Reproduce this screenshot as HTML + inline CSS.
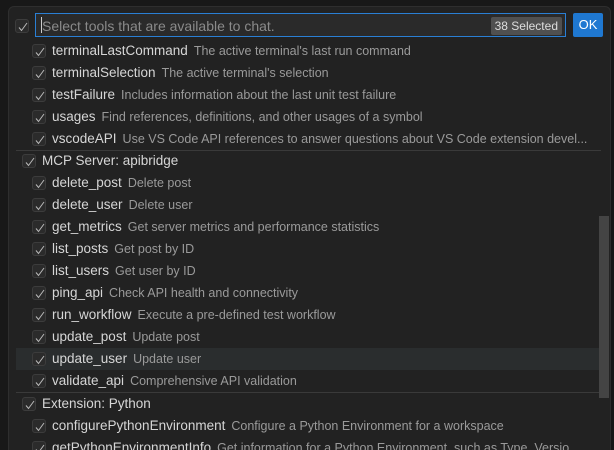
<!DOCTYPE html>
<html><head><style>
html,body{margin:0;width:614px;height:450px;overflow:hidden;}
body{background:#181818;position:relative;font-family:"Liberation Sans",sans-serif;}
.panel{position:absolute;left:8px;top:6px;width:601px;height:460px;background:#222222;border:1px solid #2e2e2e;border-radius:6px;}
.in{position:absolute;left:35px;top:13px;width:531px;height:24px;border:1px solid #2a7fd4;background:#2a2a2a;box-sizing:border-box;}
.ph{position:absolute;left:6px;top:4px;font-size:14px;color:#8a8a8a;}
.cur{position:absolute;left:5px;top:3px;width:1px;height:16px;background:#ccc;}
.badge{position:absolute;right:3px;top:3px;background:#505050;color:#ddd;font-size:12px;padding:2px 4px;border-radius:2px;}
.ok{position:absolute;left:573px;top:13px;width:30px;height:24px;background:#1f78d1;color:#fff;font-size:13px;text-align:center;line-height:24px;border-radius:2px;}
.cb{position:absolute;width:14px;height:14px;border:1px solid #3c3c3c;background:#2b2b2b;border-radius:3px;box-sizing:border-box;}
.cb svg{position:absolute;left:1px;top:1px}
.row{position:absolute;left:16px;width:583px;height:22px;font-size:13.5px;line-height:22px;white-space:nowrap;}
.row .n{color:#d6d6d6;}
.row .d{color:#9a9a9a;font-size:12.5px;margin-left:6px;}
.sep{position:absolute;left:16px;width:585px;height:1px;background:#3a3a3a;}
.hl{background:#2a2d2e;}
</style></head><body>
<div class="panel"></div>
<div class="cb" style="left:15px;top:19px;"><svg width="12" height="12"><path d="M2 6.5l2.5 3L10 2" stroke="#bbb" fill="none" stroke-width="1"/></svg></div>
<div class="in"><div class="cur"></div><div class="ph">Select tools that are available to chat.</div><div class="badge">38 Selected</div></div>
<div class="ok">OK</div>
<div class="sep" style="top:150px"></div>
<div class="sep" style="top:392px"></div>
<div style="position:absolute;left:599px;top:216px;width:10px;height:182px;background:#444"></div>
<div id="rows"></div>
<script>
var R=[["terminalLastCommand","The active terminal's last run command",1],["terminalSelection","The active terminal's selection",1],["testFailure","Includes information about the last unit test failure",1],["usages","Find references, definitions, and other usages of a symbol",1],["vscodeAPI","Use VS Code API references to answer questions about VS Code extension devel...",1],["MCP Server: apibridge","",0],["delete_post","Delete post",1],["delete_user","Delete user",1],["get_metrics","Get server metrics and performance statistics",1],["list_posts","Get post by ID",1],["list_users","Get user by ID",1],["ping_api","Check API health and connectivity",1],["run_workflow","Execute a pre-defined test workflow",1],["update_post","Update post",1],["update_user","Update user",1],["validate_api","Comprehensive API validation",1],["Extension: Python","",0],["configurePythonEnvironment","Configure a Python Environment for a workspace",1],["getPythonEnvironmentInfo","Get information for a Python Environment, such as Type, Versio...",1]];
var h="";
R.forEach(function(r,i){var y=40+i*22+(i>=16?1:0);var x=r[2]?32:22;
h+='<div class="row'+(i==14?' hl':'')+'" style="top:'+y+'px"></div>';
h+='<div class="cb" style="left:'+x+'px;top:'+(y+4)+'px"><svg width="12" height="12"><path d="M2 6.5l2.5 3L10 2" stroke="#bbb" fill="none" stroke-width="1"/></svg></div>';
h+='<div class="row" style="top:'+y+'px;left:'+(x+20)+'px;width:'+(590-x-20)+'px;overflow:hidden"><span class="n">'+r[0]+'</span>'+(r[1]?'<span class="d">'+r[1]+'</span>':'')+'</div>';});
document.getElementById("rows").innerHTML=h;
</script>
</body></html>
